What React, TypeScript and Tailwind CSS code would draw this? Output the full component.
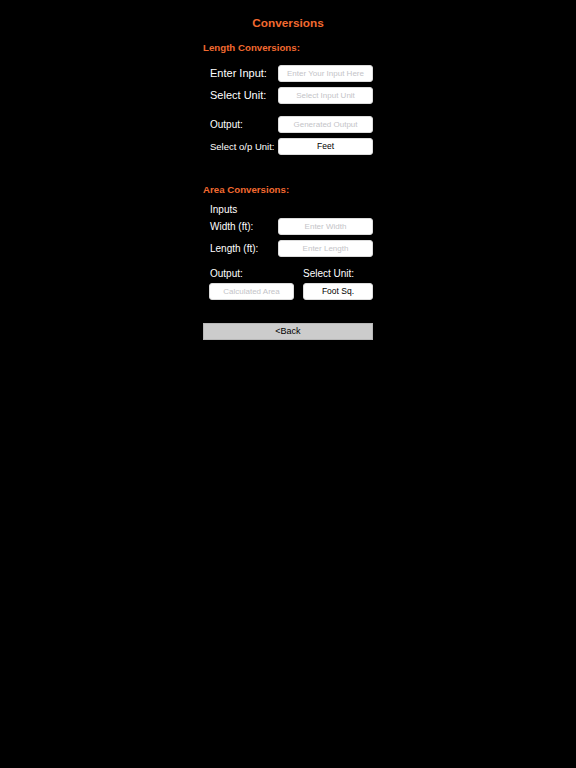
import React from "react";

function Box({ text, placeholder, w }: { text: string; placeholder?: boolean; w: string }) {
  return (
    <div
      className={`${w} h-[17px] bg-white border border-[#dcdcdc] rounded-[3px] flex items-center justify-center leading-none ${
        placeholder ? "text-[8px] text-[#c4c4c8]" : "text-[8.5px] text-black"
      }`}
    >
      {text}
    </div>
  );
}

export default function App() {
  return (
    <div className="min-h-[768px] w-full bg-black font-['Liberation_Sans',Arial,sans-serif] text-white">
      <div className="w-[170px] mx-auto pt-[16px] flex flex-col">
        <h1 className="text-center text-[11.8px] leading-[14px] font-bold text-[#f26a30]">Conversions</h1>

        <div className="mt-[12px] h-[12px] leading-[12px] text-[9.7px] font-bold text-[#f26a30]">Length Conversions:</div>

        <div className="mt-[11px] flex items-center justify-between">
          <span className="pl-[7px] text-[11px] leading-none">Enter Input:</span>
          <Box text="Enter Your Input Here" placeholder w="w-[95px]" />
        </div>
        <div className="mt-[5px] flex items-center justify-between">
          <span className="pl-[7px] text-[11px] leading-none">Select Unit:</span>
          <Box text="Select Input Unit" placeholder w="w-[95px]" />
        </div>
        <div className="mt-[12px] flex items-center justify-between">
          <span className="pl-[7px] text-[10px] leading-none">Output:</span>
          <Box text="Generated Output" placeholder w="w-[95px]" />
        </div>
        <div className="mt-[5px] flex items-center justify-between">
          <span className="pl-[7px] text-[9.5px] leading-none">Select o/p Unit:</span>
          <Box text="Feet" w="w-[95px]" />
        </div>

        <div className="mt-[29px] h-[12px] leading-[12px] text-[9.7px] font-bold text-[#f26a30]">Area Conversions:</div>

        <div className="mt-[8px] pl-[7px] h-[12px] leading-[12px] text-[10px]">Inputs</div>
        <div className="mt-[2px] flex items-center justify-between">
          <span className="pl-[7px] text-[10px] leading-none">Width (ft):</span>
          <Box text="Enter Width" placeholder w="w-[95px]" />
        </div>
        <div className="mt-[5px] flex items-center justify-between">
          <span className="pl-[7px] text-[10px] leading-none">Length (ft):</span>
          <Box text="Enter Length" placeholder w="w-[95px]" />
        </div>

        <div className="mt-[11px] flex">
          <div className="pl-[7px] w-[100px] h-[12px] leading-[12px] text-[10px]">Output:</div>
          <div className="h-[12px] leading-[12px] text-[10px]">Select Unit:</div>
        </div>
        <div className="mt-[3px] flex pl-[6px] gap-[9px]">
          <Box text="Calculated Area" placeholder w="w-[85px]" />
          <Box text="Foot Sq." w="w-[70px]" />
        </div>

        <button className="mt-[23px] h-[17px] w-full bg-[#cccccc] border border-[#b8b8b8] text-black text-[9px] leading-none flex items-center justify-center">
          &lt;Back
        </button>
      </div>
    </div>
  );
}
